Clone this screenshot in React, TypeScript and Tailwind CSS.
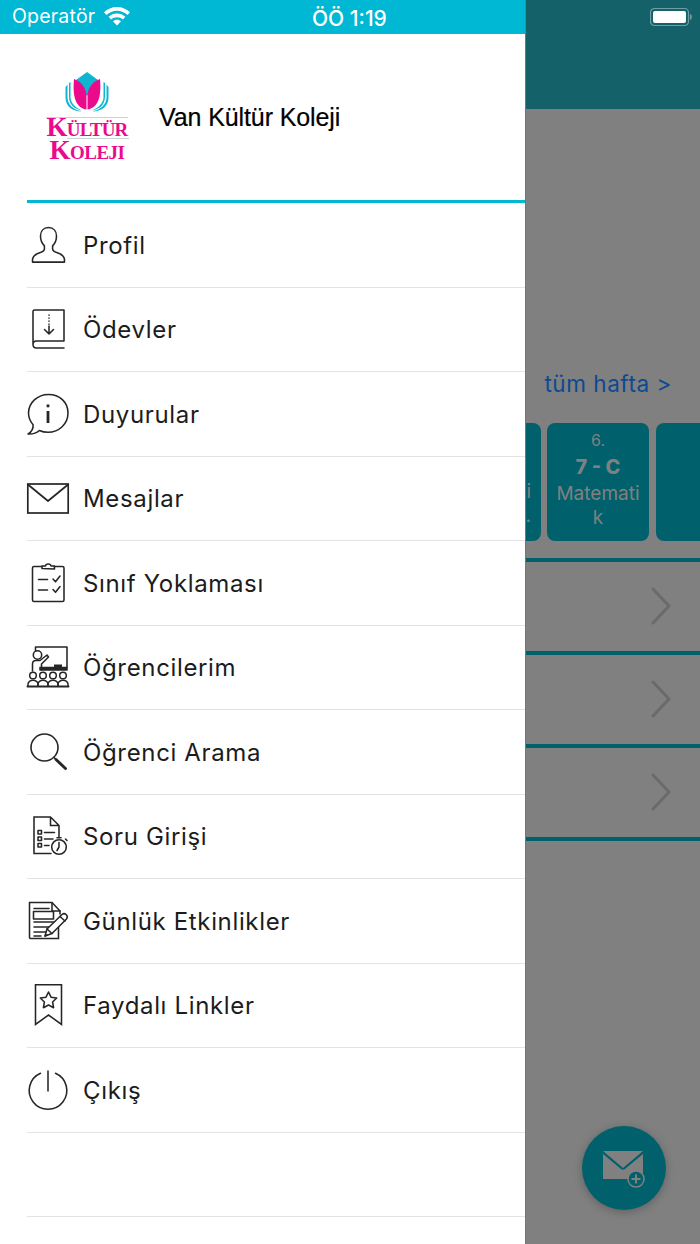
import React from "react";

const S = { fill: "none", stroke: "#262626", strokeWidth: 1.55, strokeLinecap: "round", strokeLinejoin: "round" } as const;

function Ico({ children }: { children: React.ReactNode }) {
  return (
    <svg width="42" height="42" viewBox="0 0 42 42" className="shrink-0 overflow-visible" {...S}>
      {children}
    </svg>
  );
}

const icons: Record<string, React.ReactNode> = {
  person: (
    <Ico>
      <path d="M21.500 3.500c-5 0-8 3.600-8 8.600 0 4 1.400 7.400 3.900 9.800v3.200c0 2-2.200 3-5.400 4-3.800 1.300-6.500 3-6.500 7v2h32v-2c0-4-2.700-5.700-6.500-7-3.200-1-5.400-2-5.400-4v-3.200c2.500-2.400 3.900-5.800 3.900-9.800 0-5-3-8.600-8-8.600z" />
    </Ico>
  ),
  book: (
    <Ico>
      <path d="M37 33V2H7.500A1.500 1.500 0 0 0 6 3.500V36.500C6 38.500 7.500 40 9.500 40H37M37 33H9.500C7.500 33 6 34.500 6 36.500" />
      <path d="M22 6.500V18" strokeDasharray="1.200 1.800" strokeLinecap="butt" />
      <path d="M22 18v8M17.500 21.500 22 26l4.500-4.500" />
    </Ico>
  ),
  info: (
    <Ico>
      <path d="M21.500 1.500C10.500 1.500 1.500 9.800 1.500 20c0 4.500 1.800 8.500 4.600 11.700.3 3.500-1.500 7-5 9.300 4.500.3 8.500-1 11.200-3.500 2.700 1.200 5.700 1.800 8.700 1.800 11 0 20-8.300 20-19.300S32.500 1.500 21.500 1.500z" />
      <path d="M21 18v12" strokeWidth="2.800" strokeLinecap="butt" />
      <path d="M21 11.500v2.800" strokeWidth="2.800" strokeLinecap="butt" />
    </Ico>
  ),
  mail: (
    <Ico>
      <rect x="0.800" y="7" width="40.400" height="29" strokeWidth="1.700" strokeLinejoin="miter" />
      <path d="M1.500 8 21 24 40.500 8" strokeWidth="1.700" />
    </Ico>
  ),
  clip: (
    <Ico>
      <path d="M15 4.500H7a1.500 1.500 0 0 0-1.500 1.500v32A1.500 1.500 0 0 0 7 39.500h28.500A1.500 1.500 0 0 0 37 38V6a1.500 1.500 0 0 0-1.500-1.500H27" />
      <path d="M15 6.500V4h3.500c.3-2.800 5.200-2.800 5.500 0h3.500v3z" />
      <path d="M11.500 17.500h9M11.500 28h9M26 17l2.500 2.800L33 14M26 27.500l2.500 2.800L33 24.500" />
    </Ico>
  ),
  teacher: (
    <Ico>
      <path d="M8.500 5V1h31.500v20" />
      <circle cx="10.500" cy="9" r="4.200" />
      <path d="M5.500 25v-7c0-2.500 1.500-3.500 3.500-3.500h4l7-5.500 1.500 2-7 7v6" />
      <path d="M13 24V21.500H40V24H13z" fill="#262626" />
      <rect x="27" y="18.500" width="8" height="3" fill="#262626" stroke="none" />
      <g strokeWidth="1.500">
        {[6, 16, 26, 36].map((x) => (
          <g key={x}>
            <circle cx={x} cy="29.500" r="3.300" />
            <path d={`M${x - 5} 40v-2c0-2 2.400-3.800 5-3.800s5 1.800 5 3.800v2`} />
          </g>
        ))}
      </g>
      <path d="M0.500 40.500H41.500" strokeWidth="2" />
    </Ico>
  ),
  search: (
    <Ico>
      <circle cx="17.500" cy="16.500" r="13.500" strokeWidth="1.600" />
      <path d="M27 26.500 29 28.500" strokeWidth="1.500" />
      <path d="M29 28.500 38.500 37.500" strokeWidth="2.900" />
    </Ico>
  ),
  doc: (
    <Ico>
      <path d="M24 38.500H7V2h16.500l8.500 8.500v11.500M23.500 2v8.500H32" strokeLinejoin="miter" />
      <rect x="11" y="15.500" width="3.500" height="3.500" />
      <rect x="11" y="22" width="3.500" height="3.500" />
      <rect x="11" y="28.500" width="3.500" height="3.500" />
      <path d="M17.500 17.500h10M17.500 24H26M17.500 30.500H22" />
      <circle cx="32" cy="32" r="7.300" />
      <path d="M32 27.500V32l-2 3.500M30 22.800h4M38.500 24l1.500 1.500" />
    </Ico>
  ),
  note: (
    <Ico>
      <path d="M31.500 26v12.500H3.500a1 1 0 0 1-1-1V2.500h22.500l8 8.500v3" strokeLinejoin="miter" />
      <path d="M25 3v8h8" />
      <path d="M7 8.500h15M7 22h21M7 27h19M7 32h12M7 36h7" />
      <rect x="6.500" y="11.500" width="20" height="7.500" />
      <path d="M18 36l2-7 15-14.500c1.500-1.200 3.200-.8 4.300.3s1.300 2.800.2 4.200L25 33.500z" fill="white" />
      <path d="M20 29l5 4.500M33 16.500l5 4.500M18 36l2.200-1" />
    </Ico>
  ),
  bookmark: (
    <Ico>
      <path d="M8.500.8H34.500V40.500L21.500 31 8.500 40.500z" strokeLinejoin="miter" />
      <path d="m21.500 8 2.500 5.200 5.700.8-4.100 4 1 5.700-5.100-2.700-5.100 2.700 1-5.700-4.100-4 5.700-.8z" />
    </Ico>
  ),
  power: (
    <Ico>
      <path d="M13.500 4.200a18.800 18.800 0 1 0 15 0" />
      <path d="M21 2v20" />
    </Ico>
  ),
};

const items = [
  ["person", "Profil"],
  ["book", "Ödevler"],
  ["info", "Duyurular"],
  ["mail", "Mesajlar"],
  ["clip", "Sınıf Yoklaması"],
  ["teacher", "Öğrencilerim"],
  ["search", "Öğrenci Arama"],
  ["doc", "Soru Girişi"],
  ["note", "Günlük Etkinlikler"],
  ["bookmark", "Faydalı Linkler"],
  ["power", "Çıkış"],
];

function Logo() {
  return (
    <div className="w-[84px] flex flex-col items-center text-[#ec0a8c] font-['Liberation_Serif',serif] font-bold">
      <svg width="44" height="40" viewBox="0 0 44 40">
        <path d="M22 0 33 8 22 24 11 8z" fill="#10b5cf" />
        <path d="M9 7c6 2 11 7 12.500 15v15.500C13 36 7 29 9 7zM35 7c-6 2-11 7-12.500 15v15.500C31 36 37 29 35 7z" fill="#ec0a8c" />
        <path d="M5.500 10v15c0 6 5 11 12 13.500C10 37.500 4 33 4 25V11zM2.500 12.500v13c0 7 6 12 14 14-8.500 0-16-5-16-14V15zM38.500 10v15c0 6-5 11-12 13.500 7.500-1 13.500-5.500 13.500-13.500V11zM41.500 12.500v13c0 7-6 12-14 14 8.500 0 16-5 16-14V15z" fill="#10b5cf" />
      </svg>
      <div className="w-[82px] h-px bg-[#c5d5d8] mt-[5px]" />
      <div className="text-[27px] leading-[19px] h-[19px] tracking-[-0.8px] [font-variant:small-caps] whitespace-nowrap">Kültür</div>
      <div className="w-[62px] h-px bg-[#c5d5d8] self-end mt-[1px]" />
      <div className="mt-[1px] text-[27px] leading-[20px] h-[20px] tracking-[-0.5px] [font-variant:small-caps] whitespace-nowrap">Koleji</div>
    </div>
  );
}

function Card({ className, children }: { className: string; children?: React.ReactNode }) {
  return <div className={`h-[118px] bg-[#00606c] overflow-hidden text-[#808080] text-center ${className}`}>{children}</div>;
}

export default function App() {
  return (
    <div className="w-[700px] h-[1244px] flex overflow-hidden font-['Inter','Liberation_Sans',sans-serif] bg-[#808080]">
      <div className="w-[525px] shrink-0 bg-white flex flex-col">
        <div className="h-[34px] bg-[#00b7d4] text-white flex items-center relative shrink-0">
          <span className="ml-3 text-[19.5px] leading-none tracking-[0.2px]">Operatör</span>
          <svg width="28" height="20" viewBox="0 0 28 20" className="ml-[8px] -mt-[3px]" fill="white">
            <path d="M14 1C8.800 1 4.500 3 1 6.300l2.400 2.700C6.300 6.300 9.900 4.700 14 4.700s7.700 1.600 10.600 4.300L27 6.300C23.500 3 19.200 1 14 1z" />
            <path d="M14 7.500c-3.300 0-6.200 1.200-8.400 3.300l2.500 2.700c1.600-1.400 3.600-2.300 5.900-2.300s4.300.9 5.900 2.300l2.500-2.700c-2.200-2.100-5.100-3.300-8.400-3.300z" />
            <path d="M14 13.700c-1.700 0-3 .6-4.100 1.500L14 19.500l4.100-4.300c-1.100-.9-2.400-1.500-4.100-1.500z" />
          </svg>
          <span className="absolute left-[312px] top-[8px] text-[21px] leading-none font-medium">ÖÖ 1:19</span>
        </div>
        <div className="h-[166px] shrink-0 flex items-center pl-[45px] pb-[2px]">
          <Logo />
          <span className="ml-[30px] mt-[3px] text-[25px] tracking-[-0.1px] text-black font-['Liberation_Sans',sans-serif] [-webkit-text-stroke:0.2px_black]">Van Kültür Koleji</span>
        </div>
        <div className="ml-[27px] pb-[30px]">
          <div className="h-[3px] bg-[#00b7d4]" />
          {items.map(([k, label]) => (
            <div key={k} className="h-[84.5px] flex items-center border-b border-[#e2e2e2]">
              {icons[k]}
              <span className="ml-[14px] mt-[2px] text-[24px] tracking-[0.65px] text-[#1c1c1c] whitespace-nowrap">{label}</span>
            </div>
          ))}
          <div className="h-[84.5px] border-b border-[#e2e2e2]" />
        </div>
      </div>

      <div className="flex-1 min-w-0 relative border-l border-[#767676]">
        <div className="h-[109px] bg-[#14616a] flex justify-end pt-[8px] pr-[8px]">
          <svg width="42" height="18" viewBox="0 0 42 18">
            <rect x="0.500" y="0.500" width="38" height="17" rx="4" fill="none" stroke="#6f9ea4" strokeWidth="1.200" />
            <rect x="3" y="3" width="33" height="12" rx="2" fill="white" />
            <path d="M40 6c1.300.4 1.800 1.500 1.800 3s-.5 2.600-1.800 3z" fill="#6f9ea4" />
          </svg>
        </div>
        <div className="h-[314px] flex items-end justify-end pr-[28px] pb-[25px]">
          <span className="text-[22.5px] leading-[28px] tracking-[0.55px] text-[#0c4a94]">tüm hafta &gt;</span>
        </div>
        <div className="flex">
          <Card className="w-[15px] shrink-0 rounded-r-[8px] text-[19px] leading-[24px] pt-[57px] flex flex-col items-end pr-[10px] whitespace-nowrap">
            <span>ti</span>
            <span>.</span>
          </Card>
          <Card className="w-[102px] shrink-0 ml-[6px] rounded-[8px] flex flex-col items-center pt-[8px]">
            <span className="text-[16px] leading-[19px]">6.</span>
            <span className="text-[20px] leading-[30px] mt-[2px] font-extrabold">7 - C</span>
            <span className="text-[19px] leading-[24px] w-full break-all px-[9px]">Matemati k</span>
          </Card>
          <Card className="flex-1 ml-[7px] rounded-l-[8px]" />
        </div>
        <div className="mt-[17px]">
          {[0, 1, 2].map((i) => (
            <div key={i} className="h-[93px] border-t-[4px] border-[#00606c] flex items-center justify-end pr-[29px] pb-[1px]">
              <svg width="20" height="38" viewBox="0 0 20 38" fill="none" stroke="#6a6a6a" strokeWidth="3" strokeLinecap="round" strokeLinejoin="round">
                <path d="M2 2 18 19 2 36" />
              </svg>
            </div>
          ))}
          <div className="h-[4px] bg-[#00606c]" />
        </div>
        <div className="absolute left-[56px] top-[1126px] w-[84px] h-[84px] rounded-full bg-[#00606c] shadow-[0_2px_10px_rgba(0,0,0,0.25)] flex items-center justify-center">
          <svg width="44" height="38" viewBox="0 0 44 38" className="mt-[2px]">
            <path d="M1 1h40L21 18z" fill="#808080" />
            <path d="M1 4v25h40V4L23 19c-1.200 1-2.800 1-4 0z" fill="#808080" />
            <circle cx="34" cy="29" r="8" fill="#00606c" stroke="#808080" strokeWidth="1.500" />
            <path d="M34 24.500v9M29.500 29h9" stroke="#808080" strokeWidth="2" />
          </svg>
        </div>
      </div>
    </div>
  );
}
